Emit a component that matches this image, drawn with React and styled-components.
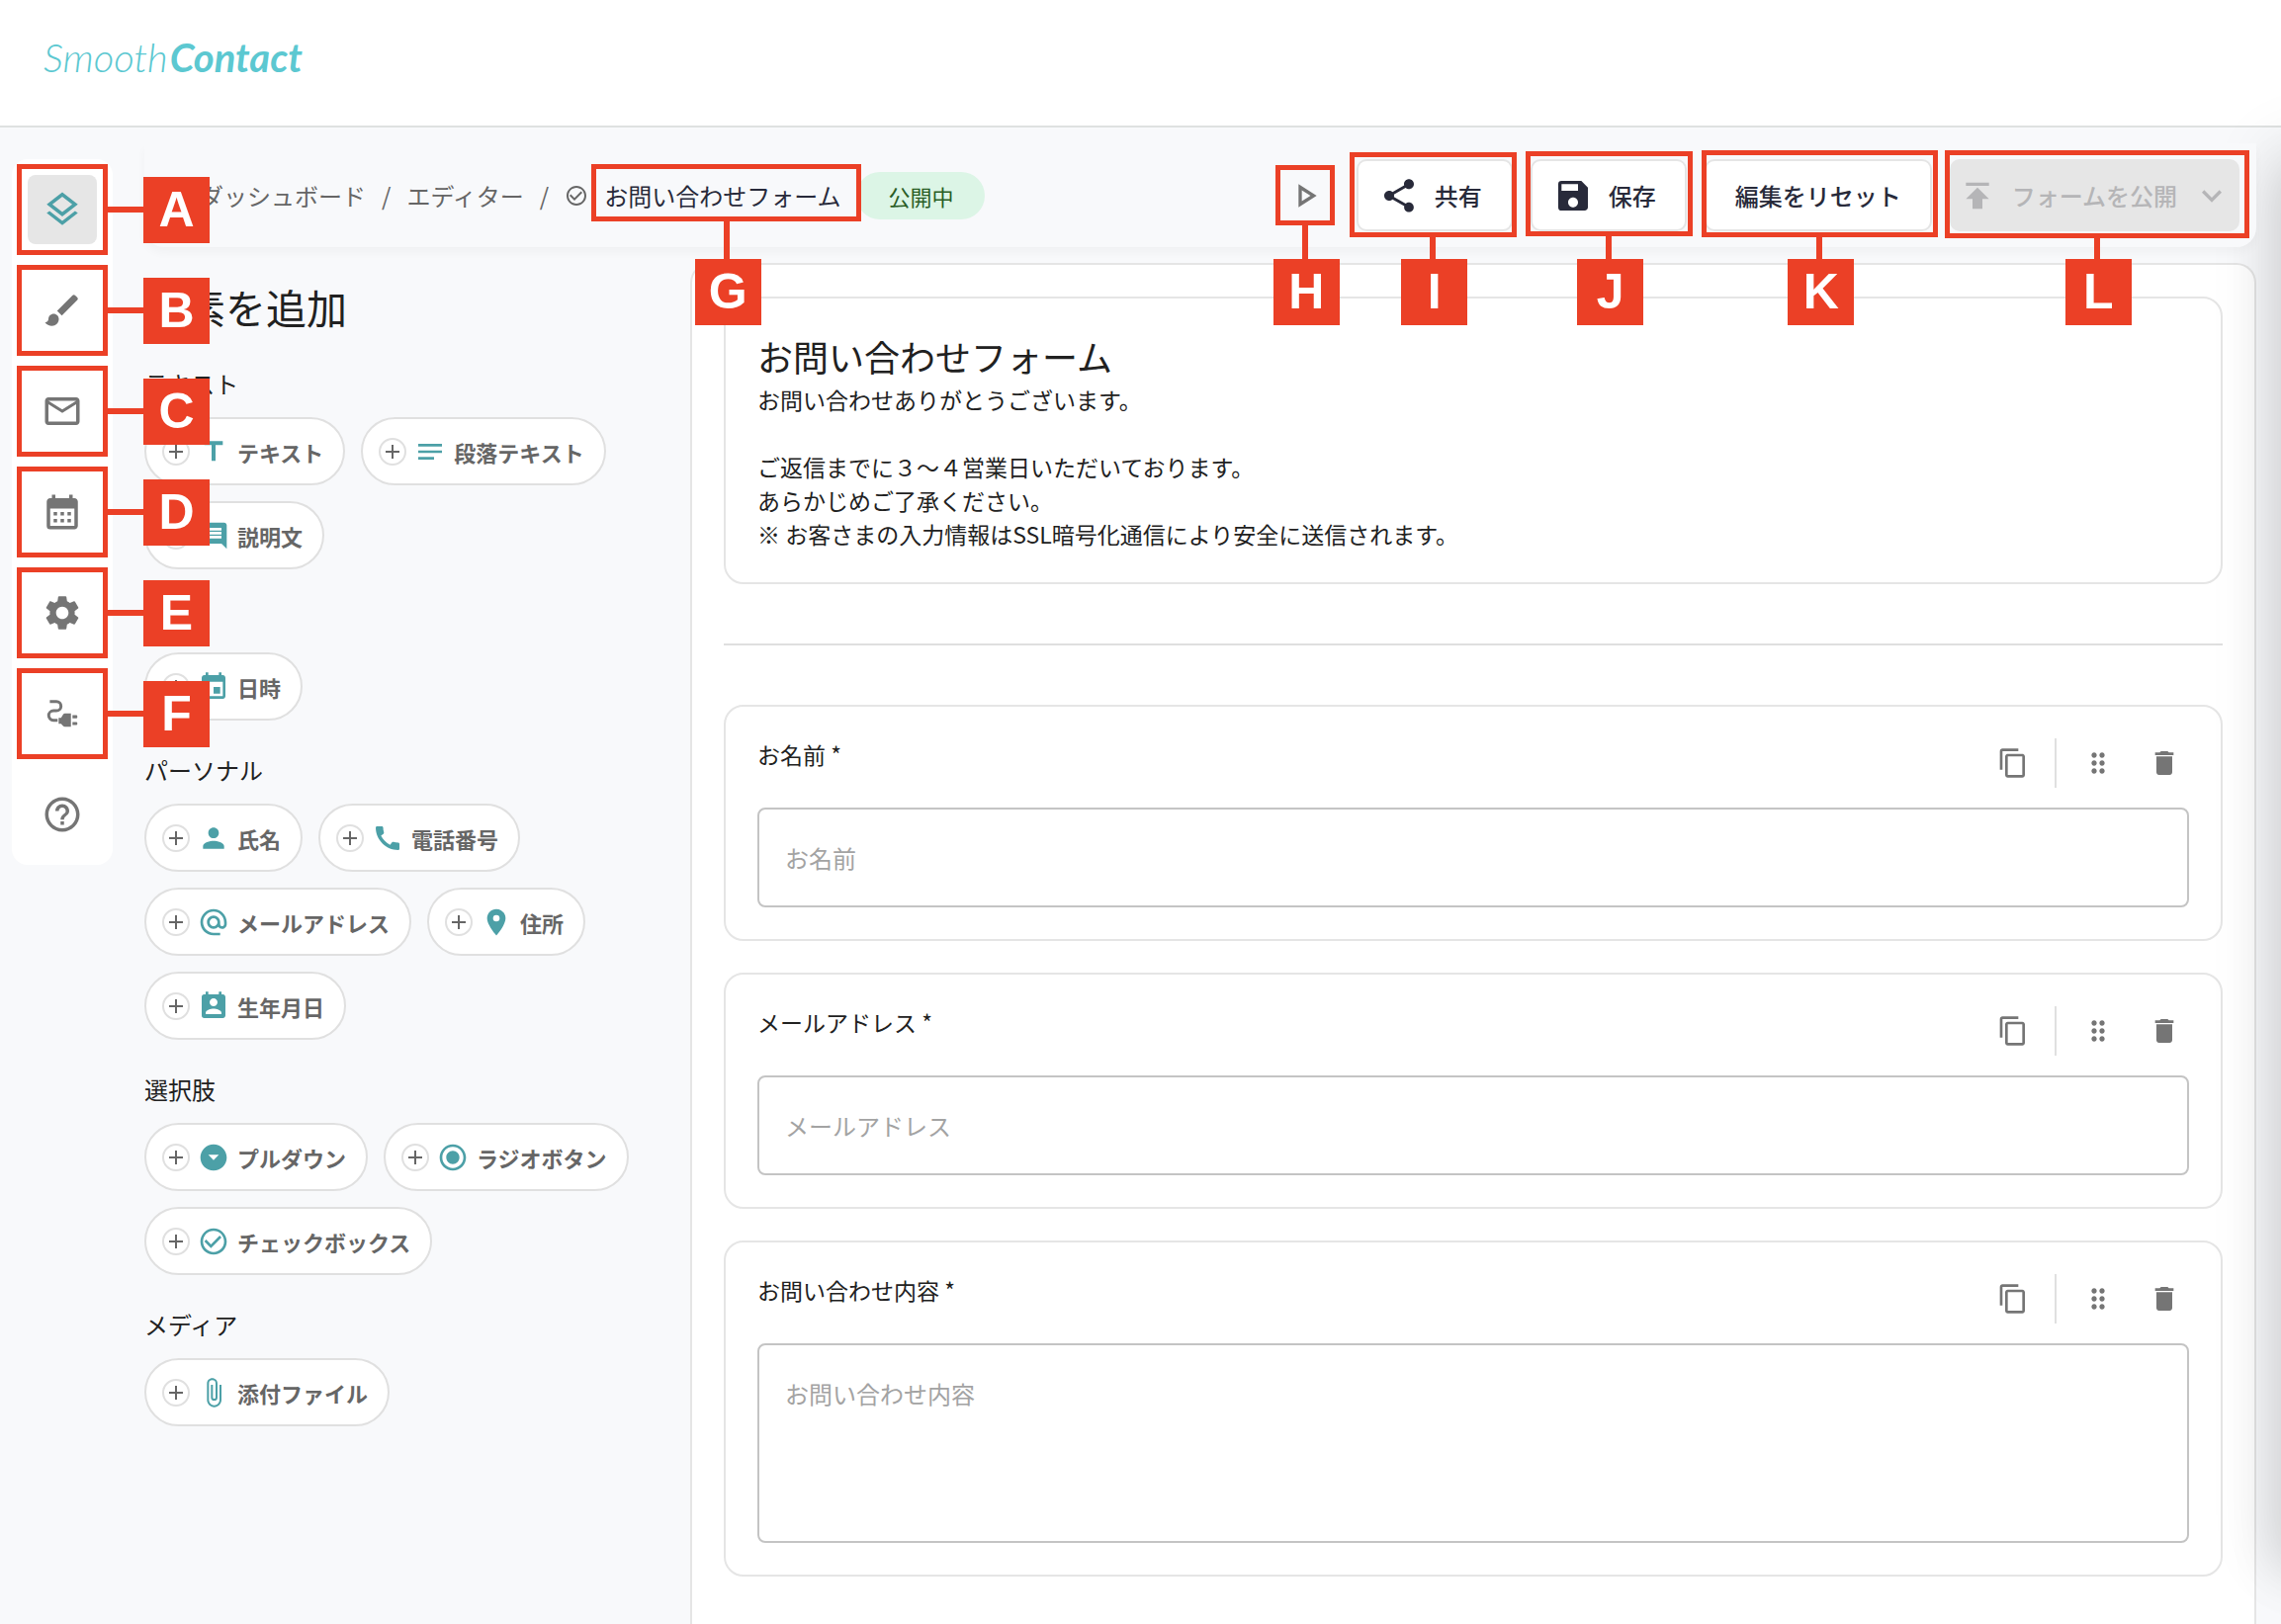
import styled, { createGlobalStyle, css } from "styled-components";
import {
	MdAdd,
	MdAlternateEmail,
	MdArrowDropDownCircle,
	MdAttachFile,
	MdBrush,
	MdCalendarMonth,
	MdCall,
	MdCheckCircleOutline,
	MdComment,
	MdContentCopy,
	MdDelete,
	MdDragIndicator,
	MdEvent,
	MdExpandMore,
	MdHelpOutline,
	MdLocationOn,
	MdMailOutline,
	MdNotes,
	MdOutlineLayers,
	MdOutlinePlayArrow,
	MdPermContactCalendar,
	MdPerson,
	MdPublish,
	MdRadioButtonChecked,
	MdSave,
	MdSettings,
	MdShare,
	MdTitle,
} from "react-icons/md";

const navItems = [
	{ letter: "A", label: "要素", icon: MdOutlineLayers, active: true },
	{ letter: "B", label: "デザイン", icon: MdBrush },
	{ letter: "C", label: "メール", icon: MdMailOutline },
	{ letter: "D", label: "カレンダー", icon: MdCalendarMonth },
	{ letter: "E", label: "設定", icon: MdSettings },
	{ letter: "F", label: "連携", icon: PlugIcon },
	{ label: "ヘルプ", icon: MdHelpOutline },
];

const sections = [
	{
		title: "テキスト",
		items: [
			{ label: "テキスト", icon: MdTitle },
			{ label: "段落テキスト", icon: MdNotes },
			{ label: "説明文", icon: MdComment },
		],
	},
	{
		title: "日時",
		items: [{ label: "日時", icon: MdEvent }],
	},
	{
		title: "パーソナル",
		items: [
			{ label: "氏名", icon: MdPerson },
			{ label: "電話番号", icon: MdCall },
			{ label: "メールアドレス", icon: MdAlternateEmail },
			{ label: "住所", icon: MdLocationOn },
			{ label: "生年月日", icon: MdPermContactCalendar },
		],
	},
	{
		title: "選択肢",
		items: [
			{ label: "プルダウン", icon: MdArrowDropDownCircle },
			{ label: "ラジオボタン", icon: MdRadioButtonChecked },
			{ label: "チェックボックス", icon: MdCheckCircleOutline },
		],
	},
	{
		title: "メディア",
		items: [{ label: "添付ファイル", icon: MdAttachFile }],
	},
];

const fields = [
	{ id: "name", label: "お名前" },
	{ id: "email", label: "メールアドレス" },
	{ id: "message", label: "お問い合わせ内容", multiline: true },
];

function PlugIcon({ size }) {
	return (
		<svg width={size} height={size} viewBox="0 0 24 24" fill="currentColor">
			<path
				d="M4.8 5H8.6a2.6 2.6 0 0 1 0 5.3H6.9a2.75 2.75 0 0 0 0 5.5H9.3"
				fill="none"
				stroke="currentColor"
				strokeWidth="1.7"
			/>
			<path d="M9.9 14.4h1.4l1.2-2q.4-.6 1-.6H17v7.8h-3.5q-.6 0-1-.4l-1.2-1.3H9.9z" />
			<path d="M17.9 12.9h2.2q.6 0 .6.6v.6q0 .6-.6.6h-2.2zM17.9 16.8h2.2q.6 0 .6.6v.6q0 .6-.6.6h-2.2z" />
		</svg>
	);
}

function Callout({ letter, side = "bottom", inset, stem }) {
	return (
		<Frame $inset={inset} aria-hidden="true">
			<Stem $side={side} $length={stem} />
			<Badge $side={side} $distance={stem}>
				{letter}
			</Badge>
		</Frame>
	);
}

function FieldCard({ field }) {
	return (
		<Card>
			<FieldHead>
				<FieldLabel htmlFor={field.id}>{field.label} *</FieldLabel>
				<FieldTools>
					<ToolButton type="button" aria-label="複製">
						<MdContentCopy size={32} />
					</ToolButton>
					<ToolDivider />
					<ToolButton type="button" aria-label="移動">
						<MdDragIndicator size={32} />
					</ToolButton>
					<ToolButton type="button" aria-label="削除">
						<MdDelete size={32} />
					</ToolButton>
				</FieldTools>
			</FieldHead>
			{field.multiline ? (
				<TextArea id={field.id} placeholder={field.label} />
			) : (
				<TextInput id={field.id} placeholder={field.label} />
			)}
		</Card>
	);
}

export default function App() {
	return (
		<Shell>
			<GlobalStyle />
			<Header>
				<Logo href="#">
					Smooth<b>Contact</b>
				</Logo>
			</Header>
			<Body>
				<SideNav>
					{navItems.map(({ letter, label, icon: Icon, active }) => (
						<Anchor key={label}>
							<NavButton type="button" aria-label={label} $active={active}>
								<Icon size={42} />
							</NavButton>
							{letter && <Callout letter={letter} side="right" inset="-11px" stem={36} />}
						</Anchor>
					))}
				</SideNav>
				<Main>
					<Toolbar>
						<Breadcrumbs>
							<Crumb href="#">ダッシュボード</Crumb>
							<span>/</span>
							<Crumb href="#">エディター</Crumb>
							<span>/</span>
							<MdCheckCircleOutline size={24} />
							<Anchor>
								<FormName>お問い合わせフォーム</FormName>
								<Callout letter="G" inset="5px -21px 10px -13px" stem={38} />
							</Anchor>
							<Status>公開中</Status>
						</Breadcrumbs>
						<Actions>
							<Preview>
								<PlayButton type="button" aria-label="プレビュー">
									<MdOutlinePlayArrow size={40} />
								</PlayButton>
								<Callout letter="H" inset="6px -10px" stem={34} />
							</Preview>
							<Anchor>
								<ActionButton type="button">
									<MdShare size={40} />
									共有
								</ActionButton>
								<Callout letter="I" inset="-7px -4px -6px -7px" stem={22} />
							</Anchor>
							<Anchor>
								<ActionButton type="button">
									<MdSave size={40} />
									保存
								</ActionButton>
								<Callout letter="J" inset="-8px -6px -5px -5px" stem={23} />
							</Anchor>
							<Anchor>
								<ActionButton type="button">編集をリセット</ActionButton>
								<Callout letter="K" inset="-9px -6px -6px -3px" stem={22} />
							</Anchor>
							<Anchor>
								<PublishButton type="button" disabled>
									<MdPublish size={40} />
									フォームを公開
									<MdExpandMore size={40} />
								</PublishButton>
								<Callout letter="L" inset="-9px -10px -7px -5px" stem={21} />
							</Anchor>
						</Actions>
					</Toolbar>
					<Workspace>
						<Palette>
							<PaletteTitle>要素を追加</PaletteTitle>
							{sections.map((section) => (
								<Section key={section.title}>
									<SectionTitle>{section.title}</SectionTitle>
									<Chips>
										{section.items.map(({ label, icon: Icon }) => (
											<Chip type="button" key={label}>
												<Plus>
													<MdAdd size={24} />
												</Plus>
												<Icon size={32} />
												{label}
											</Chip>
										))}
									</Chips>
								</Section>
							))}
						</Palette>
						<FormPanel>
							<Card>
								<FormTitle>お問い合わせフォーム</FormTitle>
								<FormText>
									お問い合わせありがとうございます。
									<br />
									<br />
									ご返信までに３〜４営業日いただいております。
									<br />
									あらかじめご了承ください。
									<br />※ お客さまの入力情報はSSL暗号化通信により安全に送信されます。
								</FormText>
							</Card>
							<Separator />
							<FieldList>
								{fields.map((field) => (
									<FieldCard key={field.id} field={field} />
								))}
							</FieldList>
						</FormPanel>
					</Workspace>
				</Main>
			</Body>
			<DrawerShadow />
		</Shell>
	);
}

const GlobalStyle = createGlobalStyle`
	* {
		box-sizing: border-box;
	}

	body {
		margin: 0;
		background-color: #f8f9fb;
		color: #212121;
		font-family: "Noto Sans CJK JP", sans-serif;
		font-size: 24px;
		line-height: 34px;
	}

	button,
	input,
	textarea {
		font-family: inherit;
		font-size: 24px;
		line-height: 34px;
	}

	svg {
		flex-shrink: 0;
	}
`;

const Shell = styled.div`
	position: relative;
	display: flex;
	flex-direction: column;
	min-height: 100vh;
	overflow: hidden;
`;

const Header = styled.header`
	display: flex;
	align-items: flex-start;
	height: 129px;
	padding: 36px 44px;
	background-color: #ffffff;
	border-bottom: 2px solid #dfe1e1;
`;

const Logo = styled.a`
	color: #5cc8d1;
	font-family: Lato, sans-serif;
	font-size: 40px;
	font-style: italic;
	font-weight: 300;
	line-height: 44px;
	text-decoration: none;

	b {
		margin-left: 2px;
		font-weight: 700;
	}
`;

const Body = styled.div`
	display: flex;
	flex: 1;
	gap: 32px;
	padding: 0 25px 0 12px;
`;

const SideNav = styled.nav`
	position: relative;
	z-index: 4;
	display: flex;
	flex-direction: column;
	align-self: flex-start;
	gap: 32px;
	margin-top: 32px;
	padding: 16px;
	background-color: #ffffff;
	border-radius: 16px;
`;

const NavButton = styled.button`
	display: flex;
	align-items: center;
	justify-content: center;
	width: 70px;
	height: 70px;
	padding: 0;
	border: none;
	border-radius: 8px;
	background-color: ${({ $active }) => ($active ? "#e6e6e6" : "transparent")};
	color: ${({ $active }) => ($active ? "#4ca0a7" : "#757575")};
`;

/* callouts */

const Anchor = styled.div`
	position: relative;
	display: flex;
	align-items: center;
`;

const Frame = styled.span`
	position: absolute;
	inset: ${({ $inset }) => $inset};
	border: 5px solid #eb4026;
	pointer-events: none;
`;

const Stem = styled.span`
	position: absolute;
	background-color: #eb4026;
	${({ $side, $length }) =>
		$side === "right"
			? css`
					top: calc(50% - 3px);
					left: 100%;
					width: ${$length + 5}px;
					height: 6px;
				`
			: css`
					top: 100%;
					left: calc(50% - 3px);
					width: 6px;
					height: ${$length + 5}px;
				`}
`;

const Badge = styled.span`
	position: absolute;
	display: flex;
	align-items: center;
	justify-content: center;
	width: 67px;
	height: 67px;
	background-color: #eb4026;
	color: #ffffff;
	font-family: "Liberation Sans", Arial, sans-serif;
	font-size: 50px;
	font-weight: 700;
	line-height: 67px;
	${({ $side, $distance }) =>
		$side === "right"
			? css`
					top: calc(50% - 33px);
					left: calc(100% + ${$distance + 5}px);
				`
			: css`
					top: calc(100% + ${$distance + 5}px);
					left: calc(50% - 32px);
				`}
`;

/* toolbar */

const Main = styled.main`
	display: flex;
	flex: 1;
	flex-direction: column;
	min-width: 0;
	margin-top: 16px;
`;

const Toolbar = styled.div`
	position: relative;
	z-index: 3;
	display: flex;
	justify-content: space-between;
	padding: 16px 17px 16px 56px;
	background-color: #f8f9fb;
	border-radius: 0 0 20px 20px;
	box-shadow: 0 6px 10px rgba(0, 0, 0, 0.03);
`;

const Breadcrumbs = styled.div`
	display: flex;
	align-items: center;
	gap: 16px;
	color: #666666;
	white-space: nowrap;

	${Anchor} {
		align-self: stretch;
	}
`;

const Crumb = styled.a`
	color: #666666;
	text-decoration: none;
`;

const FormName = styled.span`
	color: #282a3a;
`;

const Status = styled.span`
	padding: 7px 32px;
	background-color: #dcf5e6;
	border-radius: 24px;
	color: #2a5d25;
	font-size: 22px;
`;

const Actions = styled.div`
	display: flex;
	gap: 18px;
	white-space: nowrap;
`;

const Preview = styled(Anchor)`
	margin-right: 14px;
`;

const PlayButton = styled.button`
	display: flex;
	padding: 0;
	border: none;
	background: none;
	color: #757575;
`;

const ActionButton = styled.button`
	display: flex;
	align-items: center;
	gap: 16px;
	height: 73px;
	padding: 0 29px;
	background-color: #ffffff;
	border: 2px solid #e5e5e5;
	border-radius: 10px;
	color: #282a3a;
	font-weight: 500;

	svg {
		margin-left: -8px;
	}
`;

const PublishButton = styled.button`
	display: flex;
	align-items: center;
	gap: 15px;
	height: 73px;
	padding: 0 8px;
	background-color: #e6e6e6;
	border: none;
	border-radius: 10px;
	color: #b5b5b7;
	font-weight: 500;
`;

/* element palette */

const Workspace = styled.div`
	display: flex;
	flex: 1;
`;

const Palette = styled.aside`
	flex-shrink: 0;
	width: 552px;
	padding: 30px 32px 32px 0;
`;

const PaletteTitle = styled.h1`
	margin: 0 0 30px;
	font-size: 41px;
	font-weight: 400;
	line-height: 60px;
`;

const Section = styled.section`
	margin-bottom: 32px;
`;

const SectionTitle = styled.h2`
	margin: 0 0 16px;
	font-size: 24px;
	font-weight: 400;
	line-height: 36px;
`;

const Chips = styled.div`
	display: flex;
	flex-wrap: wrap;
	gap: 16px;
`;

const Chip = styled.button`
	display: flex;
	align-items: center;
	gap: 8px;
	height: 69px;
	padding: 0 20px 0 16px;
	background-color: #ffffff;
	border: 2px solid #e0e0e0;
	border-radius: 35px;
	color: #666666;
	font-size: 22px;
	font-weight: 700;
	line-height: 32px;

	> svg {
		color: #4ca0a7;
	}
`;

const Plus = styled.span`
	display: flex;
	width: 28px;
	height: 28px;
	border: 2px solid #e0e0e0;
	border-radius: 50%;
`;

/* form preview */

const FormPanel = styled.section`
	flex: 1;
	min-width: 0;
	margin-top: 16px;
	padding: 32px;
	background-color: #ffffff;
	border: 2px solid #e5e5e5;
	border-bottom: none;
	border-radius: 20px 20px 0 0;
`;

const Card = styled.div`
	padding: 32px;
	border: 2px solid #e5e5e5;
	border-radius: 20px;
`;

const FormTitle = styled.h2`
	margin: 0;
	font-size: 36px;
	font-weight: 400;
	line-height: 53px;
`;

const FormText = styled.p`
	margin: 0;
	font-size: 23px;
`;

const Separator = styled.hr`
	height: 2px;
	margin: 60px 0;
	border: none;
	background-color: #dfdfdf;
`;

const FieldList = styled.div`
	display: flex;
	flex-direction: column;
	gap: 32px;
`;

const FieldHead = styled.div`
	display: flex;
	align-items: flex-start;
	justify-content: space-between;
	margin-bottom: 20px;
`;

const FieldLabel = styled.label`
	font-size: 23px;
	line-height: 32px;
`;

const FieldTools = styled.div`
	display: flex;
	gap: 17px;
`;

const ToolButton = styled.button`
	display: flex;
	align-items: center;
	justify-content: center;
	width: 50px;
	height: 50px;
	padding: 0;
	border: none;
	background: none;
	color: #757575;
`;

const ToolDivider = styled.span`
	width: 2px;
	background-color: #e0e0e0;
`;

const inputStyles = css`
	display: block;
	width: 100%;
	padding: 32px 26px;
	background-color: #ffffff;
	border: 2px solid #c4c4c4;
	border-radius: 8px;
	color: #212121;

	&::placeholder {
		color: #a3a3a3;
		opacity: 1;
	}
`;

const TextInput = styled.input`
	${inputStyles}
	height: 101px;
`;

const TextArea = styled.textarea`
	${inputStyles}
	height: 202px;
	resize: none;
`;

const DrawerShadow = styled.div`
	position: absolute;
	z-index: 2;
	top: 145px;
	bottom: 84px;
	left: 100%;
	width: 400px;
	pointer-events: none;
	box-shadow:
		0 32px 48px 4px rgba(0, 0, 0, 0.1),
		0 12px 60px 10px rgba(0, 0, 0, 0.1);
`;
